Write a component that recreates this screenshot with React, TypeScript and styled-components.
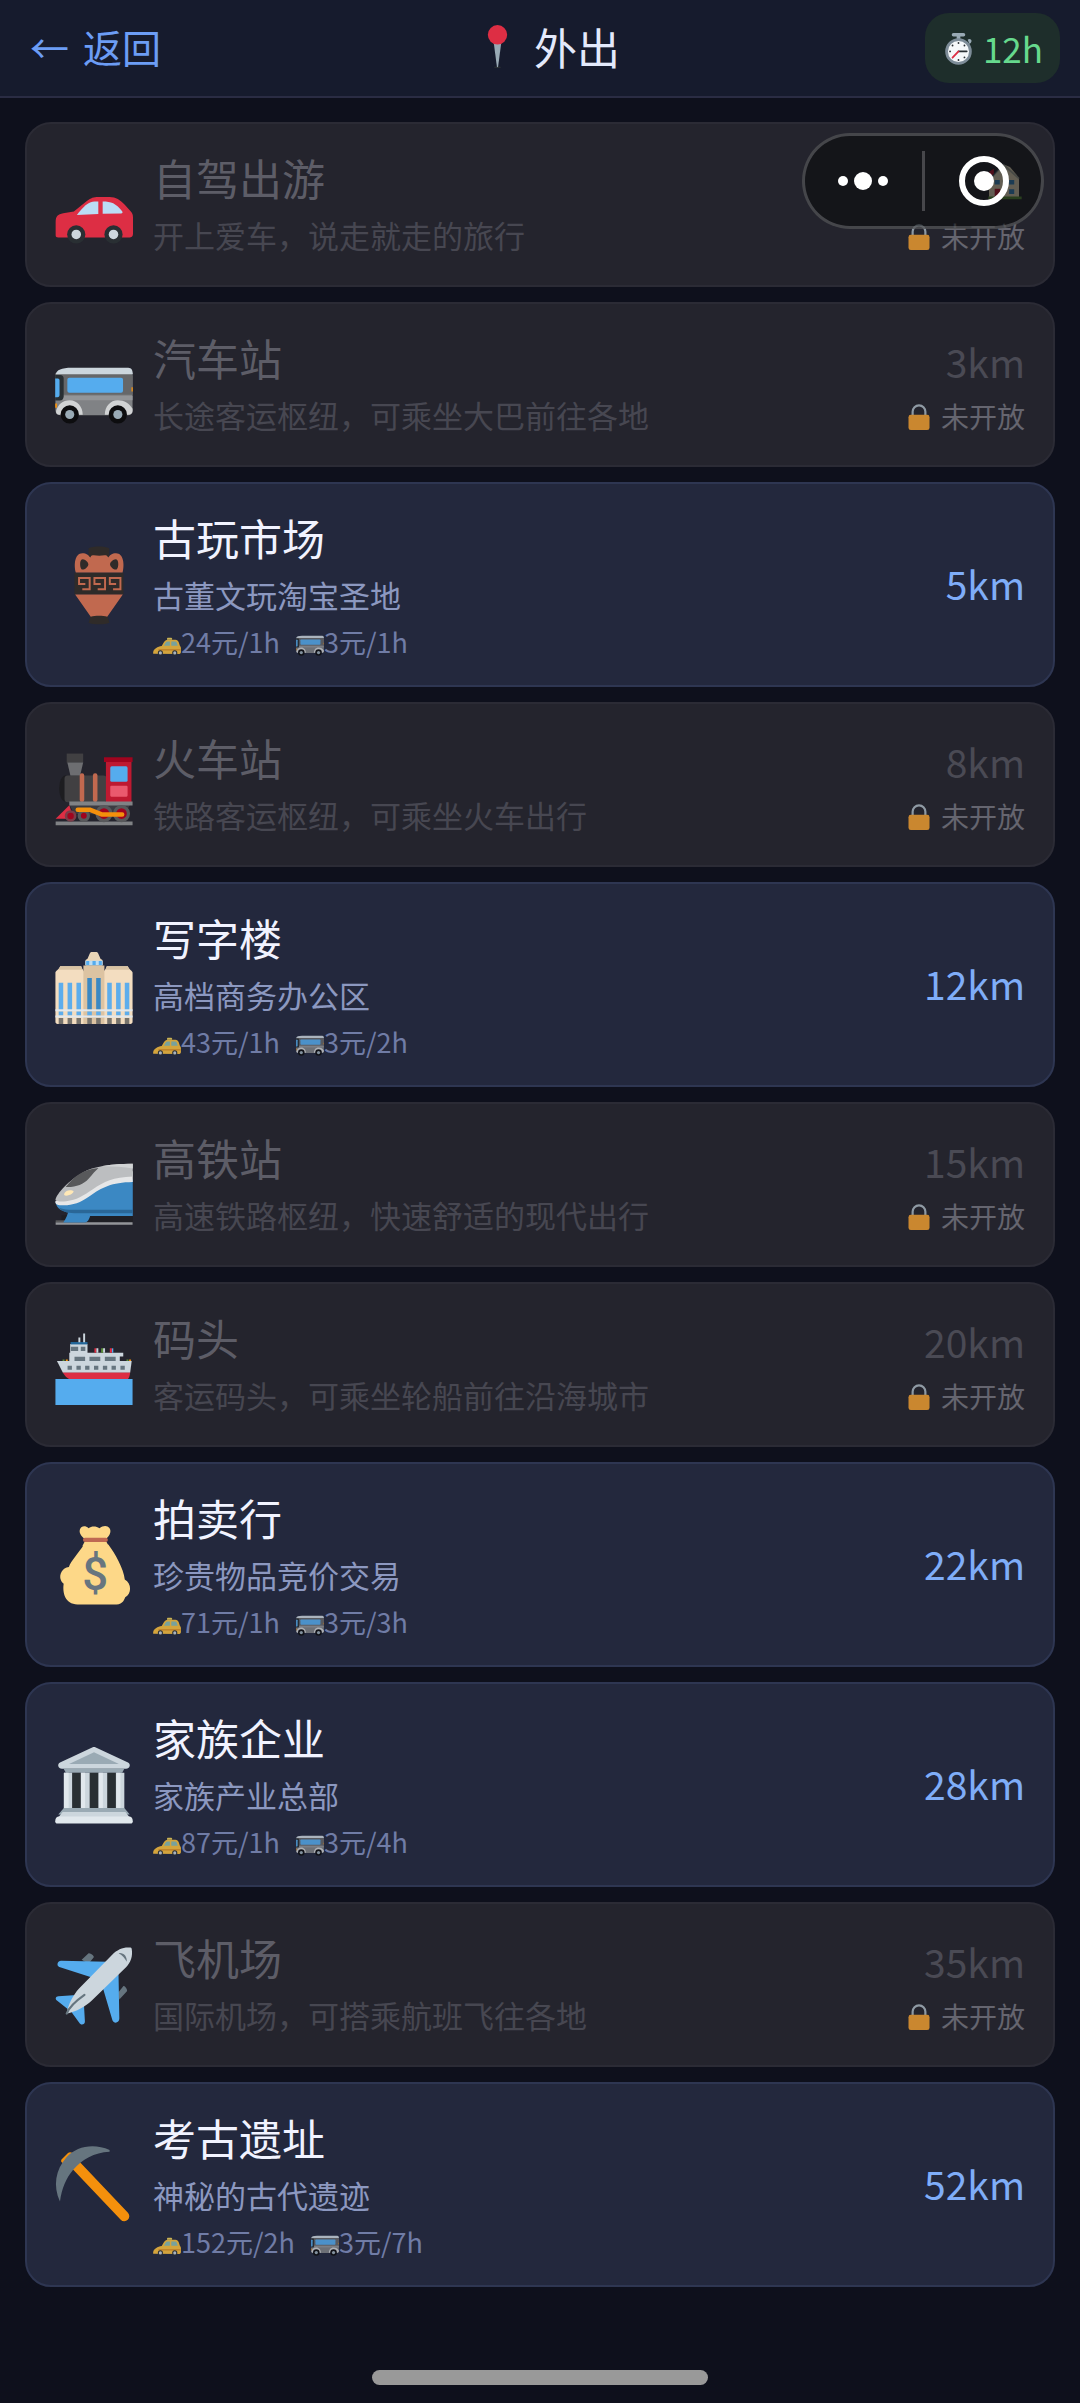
import React from "react";
import styled, { createGlobalStyle } from "styled-components";

const GlobalStyle = createGlobalStyle`
  * {
    box-sizing: border-box;
  }
  body {
    margin: 0;
    background: #0e101c;
    font-family: "Noto Sans CJK SC", "Noto Sans", sans-serif;
    color: #eef1ff;
  }
  button {
    font-family: inherit;
    border: 0;
    background: none;
  }
`;

const Page = styled.div`
  min-height: 100vh;
`;

const Header = styled.header`
  display: flex;
  align-items: center;
  justify-content: space-between;
  height: 98px;
  padding: 0 20px;
  background: #161b2d;
  border-bottom: 2px solid #2a2c43;
`;

const BackButton = styled.button`
  display: flex;
  align-items: center;
  gap: 14px;
  padding: 0 10px 4px;
  font-size: 39px;
  line-height: 56px;
  color: #6c9df5;
`;

const PageTitle = styled.h1`
  display: flex;
  align-items: center;
  gap: 15px;
  margin: 0;
  padding-bottom: 4px;
  font-size: 43px;
  line-height: 60px;
  font-weight: 400;
  color: #e3e9fb;
`;

const TimeBadge = styled.div`
  display: flex;
  align-items: center;
  gap: 8px;
  height: 70px;
  padding: 0 17px;
  border-radius: 24px;
  background: #1e2e2b;
  font-size: 35px;
  line-height: 50px;
  color: #66d98d;
`;

const Icon = styled.svg<{ $size: number; $faded?: boolean }>`
  display: block;
  flex: none;
  width: ${(p) => p.$size}px;
  height: ${(p) => p.$size}px;
  opacity: ${(p) => (p.$faded ? 0.8 : 1)};
`;

const PlaceList = styled.ul`
  display: flex;
  flex-direction: column;
  gap: 15px;
  margin: 0;
  padding: 24px 25px 116px;
  list-style: none;
`;

const PlaceCard = styled.button<{ $open: boolean }>`
  display: flex;
  align-items: center;
  gap: 20px;
  width: 100%;
  padding: 28px;
  text-align: left;
  border: 2px solid ${(p) => (p.$open ? "#2e3652" : "#2b2b35")};
  border-radius: 26px;
  background: ${(p) => (p.$open ? "#23283d" : "#24242d")};
`;

const Info = styled.span`
  display: flex;
  flex: 1;
  flex-direction: column;
  gap: 10px;
  min-width: 0;
`;

const Name = styled.span<{ $open: boolean }>`
  font-size: 43px;
  line-height: 50px;
  color: ${(p) => (p.$open ? "#f1f3ff" : "#5d5d67")};
`;

const Desc = styled.span<{ $open: boolean }>`
  font-size: 31px;
  line-height: 45px;
  color: ${(p) => (p.$open ? "#8c98c0" : "#474751")};
`;

const Costs = styled.span`
  display: flex;
  gap: 16px;
  font-size: 27px;
  line-height: 30px;
  color: #707ca6;
`;

const Cost = styled.span`
  display: flex;
  align-items: center;
`;

const Side = styled.span`
  display: flex;
  flex: none;
  flex-direction: column;
  align-items: flex-end;
  gap: 6px;
`;

const Distance = styled.span<{ $open: boolean }>`
  display: flex;
  align-items: center;
  height: 56px;
  padding-bottom: 4px;
  font-size: 39px;
  line-height: 52px;
  color: ${(p) => (p.$open ? "#7fadf8" : "#4a4a54")};
`;

const Locked = styled.span`
  display: flex;
  align-items: center;
  gap: 8px;
  font-size: 28px;
  line-height: 38px;
  color: #65656f;
`;

// floats over the list, the first card shows through it
const Capsule = styled.div`
  position: fixed;
  top: 133px;
  right: 36px;
  display: flex;
  align-items: center;
  width: 242px;
  height: 96px;
  border: 3px solid rgba(120, 120, 124, 0.5);
  border-radius: 48px;
  background: rgba(6, 8, 8, 0.52);
`;

const CapsuleButton = styled.button`
  display: flex;
  flex: 1;
  align-items: center;
  justify-content: center;
  padding: 0;
`;

const CapsuleDivider = styled.span`
  width: 3px;
  height: 60px;
  background: #47474b;
`;

const HomeBar = styled.div`
  position: fixed;
  bottom: 18px;
  left: 50%;
  width: 336px;
  height: 15px;
  margin-left: -168px;
  border-radius: 8px;
  background: #999999;
`;

const Car = () => (
  <>
    <path
      fill="#DD2E44"
      d="M.3 32V26c0-3 1-3.600 3.500-4.200L8.700 21l6-4.800c2-1.500 3-1.900 5.300-1.900h5.200c3 0 4.800 1.300 7 3.600l2.700 3c.9 1 1.100 1.700 1.100 3V31c0 1.400-.5 2-2 2H1.500C.7 33 .3 32.700.3 32z"
    />
    <path fill="#BBDDF5" d="M10.100 22.600c2-2.700 4.400-5.300 6.400-5.900 1-.3 2.300-.3 3.500-.3v5.700z" />
    <path fill="#BBDDF5" d="M22 16.400c4 0 6 .8 9 4.500.4.600.1 1-.5 1L22 22z" />
    <circle cx="9.800" cy="31.600" r="4.200" fill="#292F33" />
    <circle cx="27" cy="31.600" r="4.200" fill="#292F33" />
    <circle cx="9.800" cy="31.600" r="2.200" fill="#CCD6DD" />
    <circle cx="27" cy="31.600" r="2.200" fill="#CCD6DD" />
  </>
);

const Bus = () => (
  <>
    <path fill="#808285" d="M.2 13.500h35.600V30a2 2 0 0 1-2 2H2.500a2.300 2.300 0 0 1-2.300-2.300z" />
    <path fill="#666769" d="M.2 12.500h35.600v10H.2z" />
    <path fill="#CCD6DD" d="M.3 13c.5-2 2.500-3 7.500-3h26c1.500 0 2.100 1.300 2.100 3z" />
    <path fill="#939598" d="M3 23h32.800v2H3z" />
    <path fill="#292F33" d="M.1 13.400h2.300c1 0 1.600.6 1.600 1.600v8.200c0 1.200-.7 2-1.800 2H.1z" />
    <path fill="#55ACEE" d="M.1 15h1.200c.5 0 .8.400.8.900v6.500c0 .8-.3 1.300-1 1.300h-1z" />
    <rect x="5.700" y="14.700" width="25.700" height="6.900" rx=".9" fill="#55ACEE" />
    <path fill="#D1D3D4" d="M.5 30c.8-3 3-5 6.300-5 3.500 0 6 3 6 6.700H2C.8 31.700.4 31 .5 30zM23 31.700c0-3.800 2.500-6.700 6-6.700 3 0 5.400 1.500 6.800 4v1c0 1-.9 1.700-2 1.700z" />
    <circle cx="6.800" cy="31.600" r="4.200" fill="#0d0d0f" />
    <circle cx="29" cy="31.600" r="4.200" fill="#0d0d0f" />
    <circle cx="6.800" cy="31.600" r="2.100" fill="#99AAB5" />
    <circle cx="29" cy="31.600" r="2.100" fill="#99AAB5" />
    <path fill="#F4900C" d="M35.300 19h.6v2h-.6zM.1 26.500h.8v2H.1z" />
  </>
);

const Amphora = () => (
  <>
    <path fill="#2f2b29" d="M15.500 1c2-1 7.500-1 9.500 0v4h-9.500zM9 12.400h22.600v10H9zM16.500 32h7.600l1 3.400c-2 1-7.600 1-9.600 0z" />
    <path
      fill="#C1694F"
      d="M9.600 12.200C8.600 8.500 9.200 3.300 12.600 3.300c2 0 2.700.8 3.700 2 .4-1 .8-1.200 1.600-1 1.500.3 3.500.3 5 0 .8-.2 1.200 0 1.600 1 1-1.200 1.700-2 3.700-2 3.400 0 4 5.200 3 8.900z"
    />
    <path fill="#2f2b29" d="M11.600 8.300c0-1.300.4-2.200 1.300-2.200s2.500 1.300 2.500 2.300c0 1.200-1.700 2.500-2.600 2.500s-1.200-1.300-1.200-2.600zM29.200 8.300c0-1.300-.4-2.200-1.300-2.200s-2.500 1.300-2.500 2.300c0 1.200 1.700 2.500 2.600 2.500s1.200-1.300 1.200-2.600z" />
    <path fill="none" stroke="#C1694F" strokeWidth=".9" d="M14 17.500h-2.900v-2.700H16V20h-3.400M21.100 17.500h-2.900v-2.700h4.900V20h-3.400M28.200 17.500h-2.900v-2.700h4.900V20h-3.400" />
    <path fill="#C1694F" d="M9.300 22.400h22l-7.200 10.200c-2-.5-5.600-.5-7.600 0z" />
  </>
);

const SteamTrain = () => (
  <>
    <ellipse cx="4.800" cy="19.600" rx="2.900" ry="6" fill="#1d1d20" />
    <rect x="4.400" y="13.600" width="19.400" height="12.400" rx="1.500" fill="#414042" />
    <path fill="#414042" d="M5.400 3.500H13v4.200H5.400z" />
    <path fill="#6D6E71" d="M5.700 7.600H13l-1.400 6H7.100z" />
    <rect x="11.400" y="12.600" width="2.100" height="13.200" rx="1" fill="#C1694F" />
    <rect x="17.500" y="12.600" width="2.100" height="13.200" rx="1" fill="#C1694F" />
    <path fill="#BE1931" d="M23.500 6.500h11.800V26H23.500z" />
    <path fill="#A0041E" d="M22.600 5.200h13.200v2.200H22.600z" />
    <rect x="25.500" y="9.400" width="8" height="7.100" rx=".7" fill="#55ACEE" />
    <rect x="25.500" y="18.400" width="8" height="5" rx=".5" fill="#EA596E" />
    <path fill="#58595B" d="M6.600 27h28l-2 4.500H9z" opacity=".45" />
    <path fill="#808285" d="M6.600 25.600h29.200v1.900H6.600zM.3 34.900h35.500v1.700H.3z" />
    <g fill="#A0041E" stroke="#58595B" strokeWidth="1.500">
      <circle cx="13.300" cy="32.200" r="2.100" />
      <circle cx="22.600" cy="31.200" r="3.200" />
      <circle cx="30.700" cy="31.200" r="3.200" />
    </g>
    <path fill="#DD2E44" d="M.3 33.600l6.300-6.200 2 6.200z" />
    <circle cx="7.200" cy="32.300" r="2.100" fill="#A0041E" stroke="#7d3c48" strokeWidth="1.200" />
    <path fill="none" stroke="#F4900C" strokeWidth="2.100" strokeLinecap="round" strokeLinejoin="round" d="M10.500 29.400h5.500l5.500 2.200h9.500" />
  </>
);

const Office = () => (
  <>
    <path fill="#F3DDC0" d="M.2 12.200c0-.8 1.400-1 2.200-2.900h9.700c.5 1.700 1.400 2 1.400 2.900V36H1.200c-.6 0-1-.4-1-1zM22.400 12.200c0-.8 1-1.200 1.500-2.900h9.700c.8 1.900 2.200 2.100 2.200 2.900V35c0 .6-.4 1-1 1H22.400z" />
    <path fill="#D9C3A4" d="M2.400 9.300h9.700l.6 1.700H1.500zM23.900 9.300h9.700l.9 1.700H23.300z" />
    <path fill="#DCC3A2" d="M13.100 9h9.700v27h-9.700z" />
    <path fill="#E9D5B7" d="M15 5.900l1.100-2.500c.2-.5.500-.6 1-.6h1.800c.5 0 .8.100 1 .6L21 5.900l.9.600V9h-7.800V6.500z" />
    <path fill="#BBDDF5" d="M14 6.800h8v2.100h-8z" />
    <path fill="#55ACEE" d="M14.400 6.900h1.400v1.900h-1.400zM17.300 6.900h1.500v1.900h-1.500zM20.200 6.900h1.400v1.900h-1.400z" />
    <path fill="#E1E8ED" d="M.2 29.200h35.600v.9H.2zM.2 32.100h35.600v.9H.2z" />
    <path fill="#5DADEC" d="M1.700 17h2.100v12.200H1.700zM5.800 17h2.100v12.200H5.800zM9.900 17H12v12.200H9.900zM24.100 17h2.100v12.200h-2.100zM28.200 17h2.100v12.200h-2.100zM32.200 17h2.100v12.200h-2.100z" />
    <path fill="#3B88C3" d="M14.900 14.800H17v14.400h-2.100zM19 14.800h2.100v14.400H19z" />
    <path fill="#5DADEC" d="M1.700 30.200h2.100V32H1.700zM5.800 30.200h2.100V32H5.800zM9.900 30.200H12V32H9.900zM14.900 30.200H17V32h-2.100zM19 30.200h2.100V32H19zM24.100 30.200h2.100V32h-2.100zM28.200 30.200h2.100V32h-2.100zM32.200 30.200h2.100V32h-2.100z" />
    <path fill="#77736c" d="M1.700 33.200h2.100V36H1.700zM5.800 33.200h2.100V36H5.800zM9.900 33.200H12V36H9.900zM14.900 33.200H17V36h-2.100zM19 33.200h2.100V36H19zM24.100 33.200h2.100V36h-2.100zM28.200 33.200h2.100V36h-2.100zM32.200 33.200h2.100V36h-2.100z" />
  </>
);

const BulletTrain = () => (
  <>
    <path fill="#1f1f24" d="M3 32h33v3.200H3z" />
    <path fill="#939598" d="M.3 35.200h35.500v1.200H.3z" />
    <path fill="#58595B" d="M.3 34.300h14v.9H.3z" />
    <path fill="#3B88C3" d="M6.300 29.500h11l-1 2.600c-.5 1.500-1 3.200-2.500 3.200H3.800c1.400-2 2-3.500 2.500-5.800z" />
    <path fill="#3B88C3" d="M.2 26c.8 3.500 3.600 4.400 7.500 5 3.500.6 6 1.300 10 1.300h18.200V15.500L20 17z" />
    <path fill="#2A6797" d="M1.800 28.500c2.500 1 5 .9 8 .9h26.100V31H9c-3.500 0-5.900-.8-7.200-2.500z" />
    <path fill="#E6E7E8" d="M.1 25.600c0 .8.500 1.600 2 1.700 5 .4 9-.6 14-4.200 5.500-4 10-6.300 19.800-6.500v-5L14 15z" />
    <path fill="#BCBEC0" d="M35.900 8.200c-11 .1-18 1.300-23 4C7 15.400.5 22 .2 25c1 .6 2.500.7 5 .5C10 25 13 23 17.500 20c5-3.500 9.400-5.600 18.400-5.900z" />
    <path fill="#D1D3D4" d="M35.900 8.200c-6 0-10.900.4-14.700 1.200 5-.1 9.800.2 14.700 1z" />
    <path fill="#58595B" d="M4.900 18.900c4-5 8-8.300 15.200-8.800-1.500 1.300-2.600 2.700-4.600 5-2.400 2.700-6 4-10.600 3.800z" />
    <path fill="#FFE8B6" d="M4.200 22.200c.4-1.500 2-2 3.700-1.700 1 .2.800.8 0 1.400-1.200 1-3.900 1.600-3.700.3z" />
  </>
);

const Ship = () => (
  <>
    <path fill="#55ACEE" d="M.2 24.500h35.600v12H.2z" />
    <path fill="#DD2E44" d="M3.500 21.300h31.200c-.1 1.300-.4 2.300-1 3.200H6.500c-1.300-.8-2.200-1.800-3-3.200z" />
    <path fill="#CCD6DD" d="M.9 16.200h34.500l-.7 5.300H3.600z" />
    <path fill="#CCD6DD" d="M6.600 12.300H31.500v1.800h-1.600v2.300H6.600zM7 8.300h8v4.400H7z" />
    <path fill="#226699" d="M7.200 7.400H15v1.100H7.200z" />
    <path fill="#CCD6DD" d="M10.800 5.300h.9v2.200h-.9zM13 3.500h.9v4H13z" />
    <path fill="#66757F" d="M7.300 9.600h3.400v1.900H7.300zM11.900 9.600H14v1.900h-2.100zM9 14.200h4.900v2H9zM15.900 14.200h5v2h-5zM23 14.200h5v2h-5zM5.800 18.300h2v1.900h-2zM9.900 18.300h2v1.900h-2zM13.900 18.300h2v1.900h-2zM18 18.300h2v1.900h-2zM22.100 18.300h2v1.900h-2zM26.100 18.300h2v1.900h-2zM30.200 18.300h2v1.900h-2z" />
    <path fill="#DD2E44" d="M18.200 10.300h.9v2h-.9zM25.300 10.300h1v2h-1z" />
    <path fill="#5C913B" d="M21.300 10.300h.9v2h-.9zM3.500 15.500h.9v.7h-.9zM33 15.500h.9v.7H33z" />
    <path fill="#CCD6DD" d="M19.100 10.300h.9v2h-.9zM22.200 10.300h.9v2h-.9z" />
    <path fill="#55ACEE" d="M26.300 10.300h.6v2h-.6z" />
    <path fill="#F4900C" d="M5 15.500h.9v.7H5zM34.200 15.500h.9v.7h-.9z" />
  </>
);

const MoneyBag = () => (
  <>
    <path
      fill="#FDD888"
      d="M13.400 8.500c-2.600 4-6 7.500-7 10.400-3 .3-4.700 3.600-3.700 6 .3.800.8 1.300 1.300 1.800-.6 4 .5 9.500 6.400 9.500h18c3 0 3.700-2.500 4-3.300 3-1.500 3.100-6.400-.2-8.200-.5-5-4.400-12-7.600-16.200z"
    />
    <path
      fill="#FDD888"
      d="M13.300 5.600C12 4.500 11 3 11.500 1.600c.6-1.700 2.500-1.900 4-.6C16.800-.1 19-.1 20.500 1c1.800-1.400 3.700-1.300 4.600-.1 1.100 1.400.2 3.500-1.300 4.800z"
    />
    <rect x="12.900" y="5.400" width="11.500" height="2" rx="1" fill="#BF6952" />
    <path fill="#FDD888" d="M13.600 7.400h10.200l1 2H12.600z" />
    <text x="18.500" y="29.600" fill="#67757F" fontFamily="Roboto, sans-serif" fontSize="21" fontWeight="500" textAnchor="middle">
      $
    </text>
  </>
);

const Temple = () => (
  <>
    <path fill="#CCD6DD" d="M17.400.6c.4-.2.800-.2 1.200 0L33.700 7.600c1.500.9.800 2.900-.9 2.900H3.200c-1.700 0-2.400-2-.9-2.900z" />
    <path fill="#9AAAB4" d="M18 2.900L29.500 8.300h-23z" />
    <path fill="#9AAAB4" d="M4 10.500h28L31 12.300H5z" />
    <path fill="#CCD6DD" d="M4.100 12.300h27.900v16.600H4.100z" />
    <path fill="#E1E8ED" d="M4.100 12.300h2.200v16.600H4.100zM12 12.300h1.900v16.600H12zM20.200 12.300h1.900v16.600h-1.900zM28.300 12.300h1.900v16.600h-1.900z" />
    <path fill="#292F33" d="M7.900 12.300h4v16.600h-4zM16 12.300h4v16.600h-4zM24.100 12.300h4v16.600h-4z" />
    <path fill="#9AAAB4" d="M4.100 28.600h27.900l2.500 3H1.500z" />
    <path fill="#CCD6DD" d="M3.500 30.500h29l2 2.500h-33z" />
    <path fill="#E1E8ED" d="M1.500 32.500h33c.9 0 1.400 1 1.400 2.200 0 .8-.4 1.100-1 1.100H1.100c-.6 0-1-.3-1-1.100 0-1.200.6-2.200 1.400-2.200z" />
  </>
);

const Airplane = () => (
  <>
    <path fill="#66757F" d="M12.300 6.400l3.200-3c.5-.5 2.800 1.200 2.400 1.800l-2.400 3zM29.200 21.500l2.400-3c.6-.5 2.100 1.800 1.600 2.400l-3.500 3.800z" />
    <path fill="#55ACEE" d="M24 7.300L2.800 6.800C1.200 6.800.5 9 2 9.700L18.500 15zM29.300 12l.4 21.500c0 2-2.500 2.600-3.200.8L21.700 18zM10 22.600l-8.400.6c-1.400.1-1.600 1.300-.7 2L7 30zM13.300 26l.5 8.700c.1 1.600-1.900 2.100-2.600.7L6.500 29z" />
    <path fill="#CCD6DD" d="M35.400 1.300c.6 3.500-.5 6.400-2.500 8.400L17 25.100c-3 2.800-7 5-11.700 6.200.9-4.500 3-8.600 5.800-11.700L26.400 4c2.300-2.300 5-3.500 8-3.300.7 0 .9.100 1 .6z" />
    <path fill="none" stroke="#66757F" strokeWidth="1" strokeLinecap="round" d="M5.400 31.200c1.400-3.500 4.500-6 8.200-8.600" />
    <path fill="#66757F" d="M29.400 3.300c2.400-.3 4 1.700 3.700 4-.9-1.800-1.900-2.900-3.700-4z" />
  </>
);

const Pickaxe = () => (
  <>
    <path stroke="#F4900C" strokeWidth="4.600" strokeLinecap="round" d="M9 8.200l23 24.200" />
    <path fill="#F4900C" d="M3 6.200l3-3c1-.7 2.400-.1 2.600 1L4.600 8C3.100 8.200 2.500 7 3 6.200z" />
    <path fill="#66757F" d="M25.200 1.800C18-1.400 10-.1 5.300 5.200.2 11-1 18.500 2.300 25.600c.8-6 2.800-10.700 6-14.500C12.500 6 18 3 25.200 2.600z" />
  </>
);

const Taxi = () => (
  <>
    <path fill="#F4D65A" d="M18 13.500c0-.6.400-1 1-1h4.500c.6 0 1 .4 1 1V15H18z" />
    <path
      fill="#FFC43D"
      d="M.2 33v-1.500c0-2 1-3.800 3.500-5.500 2.800-1.800 4.500-2.500 7.500-2.800l3-5.200c1-1.800 2.500-3 5-3h9.500c2.500 0 3.500 1 4.500 3.500l1.500 4.500c.9 1 1.200 1.800 1.200 3V31c0 1.500-.8 2.300-2 2.300z"
    />
    <path fill="#8CC0B5" d="M14 22.700l2.400-4c.6-1 1.300-1.500 2.600-1.500h2.700v5.500zM23.500 17.200h4.700c1.300 0 1.900.5 2.400 1.800l1.200 3.700h-8.300z" />
    <path fill="#E08A1E" d="M7 27.400h28.500v1.400H7z" />
    <circle cx="9.500" cy="32" r="3.300" fill="#292F33" />
    <circle cx="28" cy="32" r="3.300" fill="#292F33" />
    <circle cx="9.500" cy="32" r="2" fill="#CCD6DD" />
    <circle cx="28" cy="32" r="2" fill="#CCD6DD" />
  </>
);

const Lock = () => (
  <>
    <path fill="none" stroke="#AAB8C2" strokeWidth="2.800" d="M9.800 18v-5.500a8.200 8.200 0 0 1 16.400 0V18" />
    <rect x="4.500" y="16.500" width="27" height="19.500" rx="3" fill="#F4A030" />
  </>
);

const House = () => (
  <>
    <path fill="#EFE1C1" d="M3.600 18L16.500 3l6 2.500 8.100 9.500v18h-27z" />
    <path fill="#BE1931" d="M4 16V9.500L8 7v4z" />
    <path fill="#66757F" d="M16.500 2l15 13.500-1 1.200-14-12.200L4 18l-1-1.300z" opacity=".5" />
    <path fill="#5C913B" d="M3 32h30v2.500H3z" />
    <path fill="#3B88C3" d="M8.700 17h4.600v4.200H8.700zM21.700 17h4.600v4.200h-4.600zM21.700 25.500h4.600v4.200h-4.600z" />
    <path fill="#BE1931" d="M8.700 25h5v7h-5z" />
  </>
);

const Pin = () => (
  <>
    <ellipse cx="18" cy="35.400" rx="3" ry=".6" fill="#292F33" />
    <path fill="#99AAB5" d="M14.800 14.500h6.400l-2.700 20.500c-.1.500-.9.500-1 0z" />
    <circle cx="18" cy="8.200" r="8.100" fill="#DD2E44" />
  </>
);

const Stopwatch = () => (
  <>
    <path fill="#99AAB5" d="M12.500 1h11a1.800 1.800 0 0 1 0 3.800h-11a1.800 1.800 0 0 1 0-3.800zM16 4h4v4h-4z" />
    <path fill="#99AAB5" d="M28 8.500c1-1.200 2.500-1.200 3.500-.3s1 2.400 0 3.400l-1.500 1.500z" />
    <circle cx="18" cy="21.200" r="13" fill="#F5F8FA" stroke="#7d8c98" strokeWidth="3" />
    <g fill="#292F33">
      <circle cx="18" cy="12" r="1" />
      <circle cx="18" cy="30.500" r="1" />
      <circle cx="8.800" cy="21.200" r="1" />
      <circle cx="11.500" cy="14.700" r="1" />
      <circle cx="24.500" cy="14.700" r="1" />
      <circle cx="24.500" cy="27.700" r="1" />
    </g>
    <path stroke="#292F33" strokeWidth="1.800" strokeLinecap="round" d="M18 21.200h9" />
    <path stroke="#DD2E44" strokeWidth="2" strokeLinecap="round" d="M18 21.200l-6.500 6.800" />
  </>
);

interface Place {
  name: string;
  desc: string;
  icon: React.FC;
  km?: number;
  taxi?: string;
  bus?: string;
}

const places: Place[] = [
  { name: "自驾出游", desc: "开上爱车，说走就走的旅行", icon: Car },
  { name: "汽车站", desc: "长途客运枢纽，可乘坐大巴前往各地", icon: Bus, km: 3 },
  { name: "古玩市场", desc: "古董文玩淘宝圣地", icon: Amphora, km: 5, taxi: "24元/1h", bus: "3元/1h" },
  { name: "火车站", desc: "铁路客运枢纽，可乘坐火车出行", icon: SteamTrain, km: 8 },
  { name: "写字楼", desc: "高档商务办公区", icon: Office, km: 12, taxi: "43元/1h", bus: "3元/2h" },
  { name: "高铁站", desc: "高速铁路枢纽，快速舒适的现代出行", icon: BulletTrain, km: 15 },
  { name: "码头", desc: "客运码头，可乘坐轮船前往沿海城市", icon: Ship, km: 20 },
  { name: "拍卖行", desc: "珍贵物品竞价交易", icon: MoneyBag, km: 22, taxi: "71元/1h", bus: "3元/3h" },
  { name: "家族企业", desc: "家族产业总部", icon: Temple, km: 28, taxi: "87元/1h", bus: "3元/4h" },
  { name: "飞机场", desc: "国际机场，可搭乘航班飞往各地", icon: Airplane, km: 35 },
  { name: "考古遗址", desc: "神秘的古代遗迹", icon: Pickaxe, km: 52, taxi: "152元/2h", bus: "3元/7h" },
];

interface EmojiProps {
  of: React.FC;
  size: number;
  faded?: boolean;
}

const Emoji: React.FC<EmojiProps> = ({ of: Drawing, size, faded }) => (
  <Icon viewBox="0 0 36 36" $size={size} $faded={faded} fill="none" overflow="visible" aria-hidden="true">
    <Drawing />
  </Icon>
);

const PlaceItem: React.FC<{ place: Place }> = ({ place }) => {
  const open = Boolean(place.taxi);
  return (
    <li>
      <PlaceCard type="button" $open={open} disabled={!open}>
        <Emoji of={place.icon} size={78} />
        <Info>
          <Name $open={open}>{place.name}</Name>
          <Desc $open={open}>{place.desc}</Desc>
          {open && (
            <Costs>
              <Cost>
                <Emoji of={Taxi} size={28} faded />
                {place.taxi}
              </Cost>
              <Cost>
                <Emoji of={Bus} size={28} faded />
                {place.bus}
              </Cost>
            </Costs>
          )}
        </Info>
        <Side>
          <Distance $open={open}>
            {place.km ? `${place.km}km` : <Emoji of={House} size={40} faded />}
          </Distance>
          {!open && (
            <Locked>
              <Emoji of={Lock} size={28} faded />
              未开放
            </Locked>
          )}
        </Side>
      </PlaceCard>
    </li>
  );
};

const App: React.FC = () => {
  return (
    <>
      <GlobalStyle />
      <Page>
        <Header>
          <BackButton type="button">
            <span>←</span>
            <span>返回</span>
          </BackButton>
          <PageTitle>
            <Emoji of={Pin} size={43} />
            外出
          </PageTitle>
          <TimeBadge>
            <Emoji of={Stopwatch} size={33} />
            12h
          </TimeBadge>
        </Header>
        <main>
          <PlaceList>
            {places.map((place) => (
              <PlaceItem key={place.name} place={place} />
            ))}
          </PlaceList>
        </main>
      </Page>
      <Capsule>
        <CapsuleButton type="button" aria-label="更多">
          <svg width="52" height="20" viewBox="0 0 52 20" fill="#fff">
            <circle cx="6" cy="10" r="5" />
            <circle cx="26" cy="10" r="9" />
            <circle cx="46" cy="10" r="5" />
          </svg>
        </CapsuleButton>
        <CapsuleDivider />
        <CapsuleButton type="button" aria-label="关闭">
          <svg width="52" height="52" viewBox="0 0 52 52" fill="none">
            <circle cx="27" cy="26" r="22" stroke="#fff" strokeWidth="6" />
            <circle cx="27" cy="26" r="10" fill="#fff" />
          </svg>
        </CapsuleButton>
      </Capsule>
      <HomeBar />
    </>
  );
};

export default App;
